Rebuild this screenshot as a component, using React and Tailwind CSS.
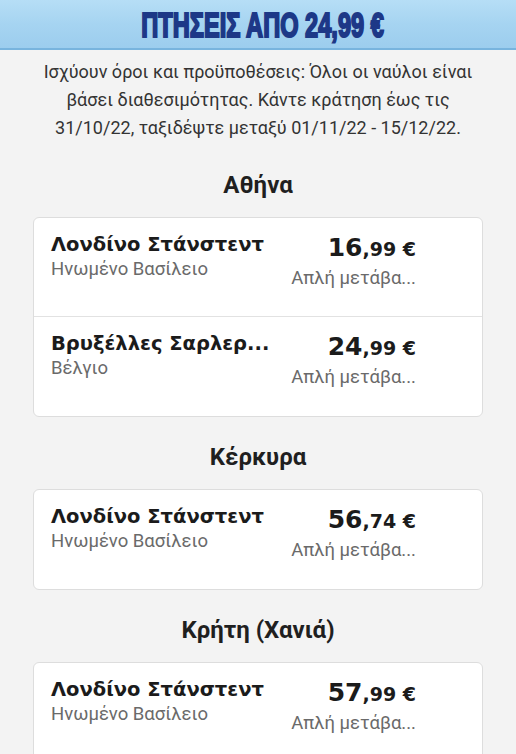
import React from 'react';

const sections = [
  {
    city: 'Αθήνα',
    flights: [
      { to: 'Λονδίνο Στάνστεντ', country: 'Ηνωμένο Βασίλειο', euros: '16', cents: ',99 €' },
      { to: 'Βρυξέλλες Σαρλερ...', country: 'Βέλγιο', euros: '24', cents: ',99 €' },
    ],
  },
  {
    city: 'Κέρκυρα',
    flights: [{ to: 'Λονδίνο Στάνστεντ', country: 'Ηνωμένο Βασίλειο', euros: '56', cents: ',74 €' }],
  },
  {
    city: 'Κρήτη (Χανιά)',
    flights: [{ to: 'Λονδίνο Στάνστεντ', country: 'Ηνωμένο Βασίλειο', euros: '57', cents: ',99 €' }],
  },
];

const FlightRow = ({ to, country, euros, cents, last }) => (
  <div className={`flex h-[99px] pl-[17px] pt-[14px] ${last ? '' : 'border-b border-[#e2e2e2]'}`}>
    <div className="w-[232px] min-w-0">
      <div className="whitespace-nowrap font-['DejaVu_Sans',sans-serif] text-[19.5px] font-bold leading-[26px] text-[#1b1b1b]">{to}</div>
      <div className="text-[18.5px] leading-[22px] text-[#6a6a6a]">{country}</div>
    </div>
    <div className="ml-[8px] flex w-[125px] flex-col items-end">
      <div className="font-['DejaVu_Sans',sans-serif] font-bold leading-[32px] text-[#1b1b1b]">
        <span className="text-[25px]">{euros}</span>
        <span className="text-[19px]">{cents}</span>
      </div>
      <div className="whitespace-nowrap text-[18.5px] leading-[22px] text-[#6a6a6a]">Απλή μετάβα...</div>
    </div>
  </div>
);

const App = () => {
  return (
    <div className="min-h-[754px] overflow-hidden bg-[#f3f3f3] font-['Roboto',sans-serif]">
      <div className="flex h-[50px] items-center justify-center border-b-2 border-[#78b4de] bg-gradient-to-b from-[#b6def6] via-[#a6d4f1] to-[#9ccdee]">
        <span className="ml-[10px] inline-block origin-center scale-x-[0.715] scale-y-[1.05] whitespace-nowrap font-['Liberation_Sans',sans-serif] text-[33px] font-bold leading-none text-[#1d3887] [-webkit-text-stroke:2px_#1d3887]">
          ΠΤΗΣΕΙΣ ΑΠΟ 24,99 €
        </span>
      </div>

      <p className="px-[26px] pt-[8px] text-center text-[18px] leading-[28px] text-[#333333]">
        Ισχύουν όροι και προϋποθέσεις: Όλοι οι ναύλοι είναι βάσει διαθεσιμότητας. Κάντε κράτηση έως τις 31/10/22, ταξιδέψτε μεταξύ 01/11/22 - 15/12/22.
      </p>

      <div className="px-[33px] pt-[27px]">
        {sections.map((s) => (
          <div key={s.city} className="mb-[24px]">
            <h2 className="mb-[16px] text-center text-[24px] font-bold leading-[32px] text-[#1f1f1f]">{s.city}</h2>
            <div className="overflow-hidden rounded-[6px] border border-[#dddddd] bg-white">
              {s.flights.map((f, i) => (
                <FlightRow key={i} {...f} last={i === s.flights.length - 1} />
              ))}
            </div>
          </div>
        ))}
      </div>
    </div>
  );
};

export default App;
